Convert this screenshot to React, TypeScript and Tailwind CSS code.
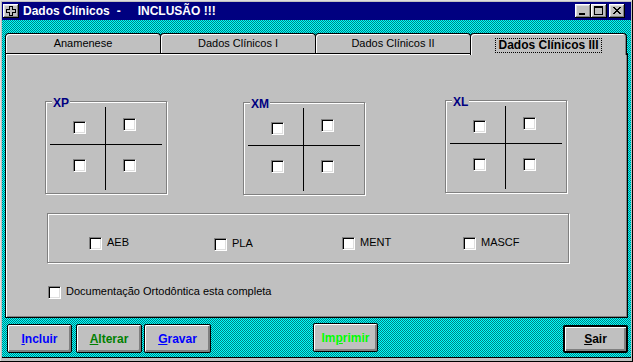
import React from "react";

function Check() {
  return (
    <div className="w-[13px] h-[13px] shrink-0 bg-white border border-t-[#808080] border-l-[#808080] border-r-white border-b-white shadow-[inset_1px_1px_0_#000,inset_-1px_-1px_0_#dfdfdf]" />
  );
}

function Labeled({ label, className = "" }: { label: string; className?: string }) {
  return (
    <div className={`flex items-start gap-[5px] ${className}`}>
      <Check />
      <span className="text-[11px] leading-[11px] text-black">{label}</span>
    </div>
  );
}

function Quadrant({ label, className = "" }: { label: string; className?: string }) {
  return (
    <div className={`relative w-[122px] h-[93px] border border-[#808080] shadow-[inset_1px_1px_0_#fff,1px_1px_0_#fff] ${className}`}>
      <span className="absolute left-[6px] top-[-5px] bg-[#c0c0c0] px-px text-[12px] leading-[12px] font-bold text-[#000080]">
        {label}
      </span>
      <div className="ml-[4px] mt-[5px] grid grid-cols-[56px_56px] grid-rows-[38px_45px]">
        <div className="border-r border-b border-black pl-[23px] pt-[14px]">
          <Check />
        </div>
        <div className="border-b border-black pl-[17px] pt-[11px]">
          <Check />
        </div>
        <div className="border-r border-black pl-[23px] pt-[14px]">
          <Check />
        </div>
        <div className="pl-[17px] pt-[14px]">
          <Check />
        </div>
      </div>
    </div>
  );
}

const capBtn =
  "w-[16px] h-[14px] bg-[#c0c0c0] shadow-[inset_-1px_-1px_0_#000,inset_1px_1px_0_#fff,inset_-2px_-2px_0_#808080,inset_2px_2px_0_#dfdfdf]";

const tab =
  "w-[156px] h-[20px] border border-b-0 border-black rounded-t-[4px] bg-[#c0c0c0] shadow-[inset_1px_1px_0_#fff] flex items-center justify-center text-[11px] text-black";

const btn =
  "h-[29px] bg-[#c0c0c0] border border-black rounded-[2px] shadow-[inset_1px_1px_0_#fff,inset_-2px_-2px_0_#808080] flex items-center justify-center text-[12px] font-bold";

export default function App() {
  return (
    <div className="w-[633px] h-[362px] bg-[#c0c0c0] px-[2px] pt-[2px] pb-[4px] font-['Liberation_Sans',Arial,sans-serif] shadow-[inset_-1px_-1px_0_#000,inset_1px_1px_0_#dfdfdf] overflow-hidden">
      {/* Title bar */}
      <div className="h-[18px] bg-[#000080] flex items-center pl-px pr-[6px] text-white text-[12px] font-bold">
        <div className={capBtn}>
          <svg width="16" height="14" shapeRendering="crispEdges">
            <path
              d="M6.5 2.5H9.5V5.5H12.5V8.5H9.5V11.5H6.5V8.5H3.5V5.5H6.5Z"
              fill="none"
              stroke="#000"
              strokeWidth="1"
            />
          </svg>
        </div>
        <span className="ml-[4px]">Dados Clínicos</span>
        <span className="ml-[7px]">-</span>
        <span className="ml-[17px]">INCLUSÃO !!!</span>
        <div className="ml-auto flex">
          <div className={capBtn}>
            <svg width="16" height="14" shapeRendering="crispEdges">
              <rect x="4" y="9" width="6" height="2" fill="#000" />
            </svg>
          </div>
          <div className={capBtn}>
            <svg width="16" height="14" shapeRendering="crispEdges">
              <rect x="3" y="2" width="9" height="2" fill="#000" />
              <rect x="3" y="2" width="1" height="9" fill="#000" />
              <rect x="11" y="2" width="1" height="9" fill="#000" />
              <rect x="3" y="10" width="9" height="1" fill="#000" />
            </svg>
          </div>
          <div className={`${capBtn} ml-[2px]`}>
            <svg width="16" height="14" shapeRendering="crispEdges">
              <path
                d="M4 3h2v1h-2z M10 3h2v1h-2z M5 4h2v1h-2z M9 4h2v1h-2z M6 5h4v1h-4z M7 6h2v1h-2z M6 7h4v1h-4z M5 8h2v1h-2z M9 8h2v1h-2z M4 9h2v1h-2z M10 9h2v1h-2z"
                fill="#000"
              />
            </svg>
          </div>
        </div>
      </div>

      {/* Client area */}
      <div className="h-[338px] border-b border-black bg-[#00c0c0] bg-[image:repeating-conic-gradient(#00ffff_0_25%,#008080_0_50%)] bg-[length:2px_2px] pt-[13px]">
        {/* Tabs */}
        <div className="relative z-10 ml-[3px] flex items-end h-[20px]">
          <div className={tab}>Anamenese</div>
          <div className={`${tab} -ml-px`}>Dados Clínicos I</div>
          <div className={`${tab} -ml-px`}>Dados Clínicos II</div>
          <div className="-ml-px w-[157px] h-[22px] -mb-[2px] self-start border border-b-0 border-black rounded-t-[4px] bg-[#c0c0c0] shadow-[inset_1px_1px_0_#fff,inset_-1px_0_0_#808080] flex justify-center pt-[4px]">
            <span className="h-[15px] border border-dotted border-black px-[2px] text-[12px] leading-[13px] font-bold text-black">
              Dados Clínicos III
            </span>
          </div>
        </div>

        {/* Panel */}
        <div className="ml-[3px] w-[623px] h-[265px] bg-[#c0c0c0] border border-black shadow-[inset_1px_1px_0_#fff,inset_-1px_-1px_0_#808080] pl-[39px] pt-[47px]">
          <div className="flex items-start">
            <Quadrant label="XP" />
            <Quadrant label="XM" className="ml-[76px] mt-px" />
            <Quadrant label="XL" className="ml-[80px] -mt-px" />
          </div>

          <div className="ml-[2px] mt-[18px] w-[522px] h-[50px] border border-[#808080] shadow-[inset_1px_1px_0_#fff,1px_1px_0_#fff] pl-[41px] pt-[23px] flex items-start">
            <Labeled label="AEB" className="w-[125px]" />
            <Labeled label="PLA" className="w-[128px] mt-px" />
            <Labeled label="MENT" className="w-[121px]" />
            <Labeled label="MASCF" />
          </div>

          <Labeled label="Documentação Ortodôntica esta completa" className="ml-[3px] mt-[23px]" />
        </div>

        {/* Buttons */}
        <div className="mt-[6px] ml-[5px] flex items-start">
          <button className={`${btn} w-[65px] text-[#0000ff]`}>
            <span className="underline">I</span>ncluir
          </button>
          <button className={`${btn} w-[66px] ml-[4px] text-[#008000]`}>
            <span className="underline">A</span>lterar
          </button>
          <button className={`${btn} w-[67px] ml-[2px] text-[#0000ff]`}>
            <span className="underline">G</span>ravar
          </button>
          <button className={`${btn} w-[65px] ml-[102px] -mt-px text-[#00ff00]`}>
            Im<span className="underline">p</span>rimir
          </button>
          <button className="ml-[185px] mt-px w-[65px] h-[28px] bg-[#c0c0c0] border-2 border-black rounded-[2px] shadow-[inset_1px_1px_0_#fff,inset_-2px_-2px_0_#808080] flex items-center justify-center text-[12px] font-bold text-black">
            <span className="underline">S</span>air
          </button>
        </div>
      </div>
    </div>
  );
}
